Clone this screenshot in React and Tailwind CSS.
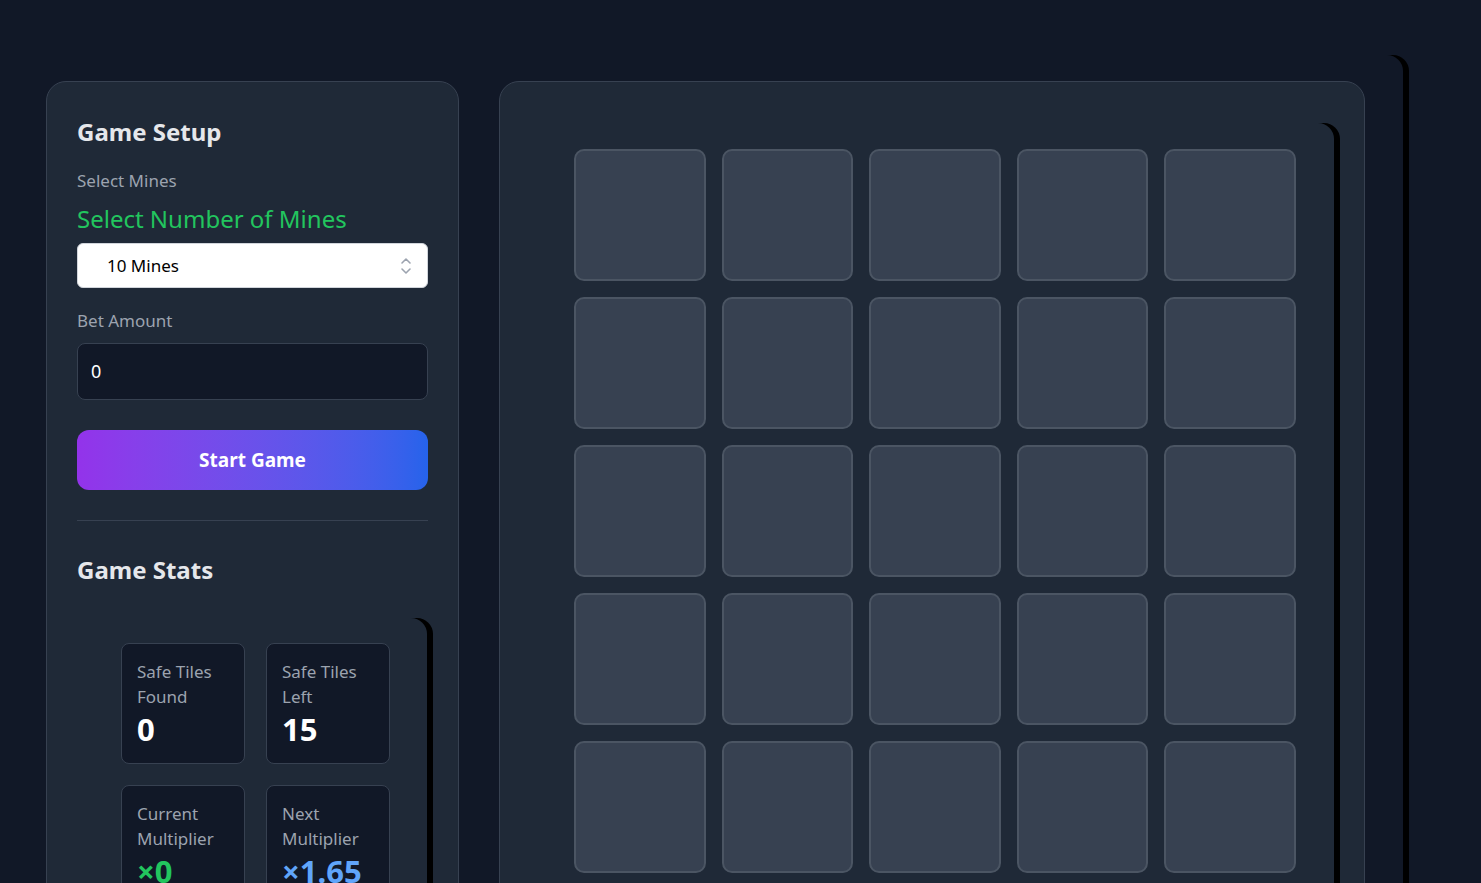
import React from "react";

const stats = [
  { label: "Safe Tiles Found", value: "0", color: "text-white" },
  { label: "Safe Tiles Left", value: "15", color: "text-white" },
  { label: "Current Multiplier", value: "×0", color: "text-[#22c55e]" },
  { label: "Next Multiplier", value: "×1.65", color: "text-[#60a5fa]" },
];

const StatCard = ({ label, value, color }) => (
  <div className="w-[124px] h-[121px] bg-[#111827] border border-[#374151] rounded-lg px-[15px] pt-[15px] overflow-hidden">
    <p className="text-[17px] leading-[25px] text-[#9ca3af]">{label}</p>
    <p className={`text-[31px] leading-[40px] font-bold ${color}`}>{value}</p>
  </div>
);

const UpDown = () => (
  <svg width="14" height="22" viewBox="0 0 14 22" fill="none" stroke="#9ca3af" strokeWidth="1.6" strokeLinecap="round" strokeLinejoin="round">
    <path d="M3 8 L7 4 L11 8" />
    <path d="M3 14 L7 18 L11 14" />
  </svg>
);

export default function App() {
  const tiles = Array.from({ length: 25 });

  return (
    <div className="min-h-screen h-[883px] overflow-hidden bg-[#111827] font-['Noto_Sans',sans-serif]">
      <div className="pt-[55px] pl-[21px]">
        <div className="w-[1382px] rounded-2xl shadow-[6px_0_0_#000] pt-[26px] pl-[25px] flex gap-[40px]">
          {/* left panel */}
          <div className="w-[413px] h-[900px] shrink-0 bg-[#1f2937] border border-[#374151] rounded-[20px] px-[30px] pt-[30px]">
            <h2 className="text-[24px] leading-[40px] font-bold text-[#e5e7eb]">Game Setup</h2>

            <p className="mt-[17px] text-[17px] leading-[24px] text-[#9ca3af]">Select Mines</p>
            <h3 className="mt-[10px] text-[24px] leading-[32px] text-[#22c55e]">Select Number of Mines</h3>

            <div className="mt-[8px] h-[45px] bg-white border border-[#d1d5db] rounded-md flex items-center justify-between pl-[29px] pr-[14px]">
              <span className="text-[17px] text-black">10 Mines</span>
              <UpDown />
            </div>

            <p className="mt-[21px] text-[17px] leading-[24px] text-[#9ca3af]">Bet Amount</p>
            <div className="mt-[10px] h-[57px] bg-[#111827] border border-[#374151] rounded-lg flex items-center px-[13px]">
              <span className="text-[18px] text-white">0</span>
            </div>

            <button className="mt-[30px] w-full h-[60px] rounded-xl bg-gradient-to-r from-[#9333ea] to-[#2563eb] text-white text-[19px] font-bold">
              Start Game
            </button>

            <div className="mt-[30px] border-t border-[#374151]" />

            <h2 className="mt-[29px] text-[24px] leading-[40px] font-bold text-[#e5e7eb]">Game Stats</h2>

            <div className="mt-[28px] w-[350px] h-[400px] rounded-2xl shadow-[6px_0_0_#000] pt-[25px] pl-[44px]">
              <div className="grid grid-cols-[124px_124px] gap-x-[21px] gap-y-[21px]">
                {stats.map((s) => (
                  <StatCard key={s.label} {...s} />
                ))}
              </div>
            </div>
          </div>

          {/* board */}
          <div className="w-[866px] h-[900px] shrink-0 bg-[#1f2937] border border-[#374151] rounded-[20px] pt-[41px] pl-[37px]">
            <div className="w-[797px] h-[900px] rounded-2xl shadow-[6px_0_0_#000] pt-[26px]">
              <div className="ml-[37px] w-[722px] grid grid-cols-5 gap-x-[16px] gap-y-[16px]">
                {tiles.map((_, i) => (
                  <button
                    key={i}
                    className="h-[132px] bg-[#374151] border-2 border-[#4b5563] rounded-[10px]"
                  />
                ))}
              </div>
            </div>
          </div>
        </div>
      </div>
    </div>
  );
}
